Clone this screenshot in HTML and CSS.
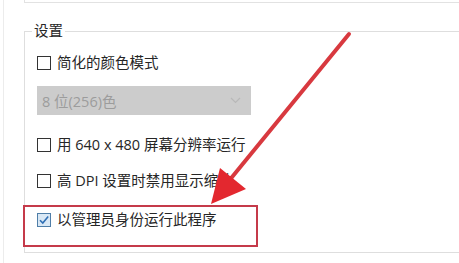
FILE: index.html
```html
<!DOCTYPE html>
<html lang="zh-CN">
<head>
<meta charset="utf-8">
<title>设置</title>
<link rel="stylesheet" href="styles.css">
</head>
<body>
<div class="window">
  <div class="panel">
    <div class="topbox"></div>
    <fieldset class="group">
      <legend class="legend">设置</legend>
      <div class="row row-first">
        <span class="box"></span><span class="label">简化的颜色模式</span>
      </div>
      <div class="select">
        <span class="select-text">8 位(256)色</span>
        <svg class="chev" width="11" height="7" viewBox="0 0 11 7"><path d="M1 1 L5.5 5.5 L10 1" fill="none" stroke="#b8b8b8" stroke-width="1.2"/></svg>
      </div>
      <div class="row row-640">
        <span class="box"></span><span class="label">用 640 x 480 屏幕分辨率运行</span>
      </div>
      <div class="row row-dpi">
        <span class="box"></span><span class="label">高 DPI 设置时禁用显示缩放</span>
      </div>
      <div class="highlight">
        <div class="row">
          <span class="box box-checked">
            <svg width="12" height="12" viewBox="0 0 12 12"><path d="M2 6.2 L4.8 9 L10.2 2.6" fill="none" stroke="#2f6fb5" stroke-width="1.6"/></svg>
          </span><span class="label">以管理员身份运行此程序</span>
        </div>
      </div>
    </fieldset>
  </div>
  <svg class="arrow" width="459" height="263" viewBox="0 0 459 263">
    <line x1="349" y1="34" x2="228" y2="182" stroke="#d8393f" stroke-width="4" stroke-linecap="round"/>
    <polygon points="220,168 246,189 211,204" fill="#e3282f"/>
  </svg>
</div>
</body>
</html>
```

FILE: styles.css
```css
html, body {
  margin: 0;
  padding: 0;
  background: #ffffff;
  overflow: hidden;
}

.window {
  position: relative;
  width: 459px;
  height: 263px;
  overflow: hidden;
  font-family: "Open Sans", "Noto Sans CJK SC", sans-serif;
  font-size: 14.5px;
  color: #262626;
}

.panel {
  margin-left: 3px;
  height: 263px;
  border-left: 1px solid #ececec;
  padding-left: 20px;
  box-sizing: border-box;
}

.topbox {
  width: 500px;
  height: 2px;
  border-left: 1px solid #e2e2e2;
  border-bottom: 1px solid #e2e2e2;
}

.group {
  margin: 20px 0 0 0;
  width: 500px;
  box-sizing: border-box;
  height: 230px;
  border: 1px solid #dedede;
  padding: 0 0 0 12px;
  min-width: 0;
}

.legend {
  margin-left: -5px;
  padding: 0 2px;
  line-height: 16px;
  height: 16px;
}

.row {
  display: flex;
  align-items: center;
  height: 20px;
  line-height: 20px;
  white-space: nowrap;
}

.row-first { margin-top: 14px; }
.row-640 { margin-top: 20px; }
.row-dpi { margin-top: 16px; }

.box {
  width: 14px;
  height: 14px;
  box-sizing: border-box;
  border: 1px solid #333333;
  background: #ffffff;
  margin-right: 6px;
  flex: none;
  display: flex;
  align-items: center;
  justify-content: center;
}

.box-checked {
  border-color: #4f7ea8;
  background: #d9e8f5;
}

.select {
  margin-top: 13px;
  width: 214px;
  height: 29px;
  background: #cccccc;
  display: flex;
  align-items: center;
  justify-content: space-between;
  padding: 0 10px 0 5px;
  box-sizing: border-box;
  color: #9c9c9c;
}

.highlight {
  margin: 14px 0 0 -14px;
  width: 235px;
  height: 42px;
  box-sizing: border-box;
  border: 2px solid #c53a4a;
  padding: 3px 0 0 12px;
}

.arrow {
  position: absolute;
  left: 0;
  top: 0;
  pointer-events: none;
}
```
